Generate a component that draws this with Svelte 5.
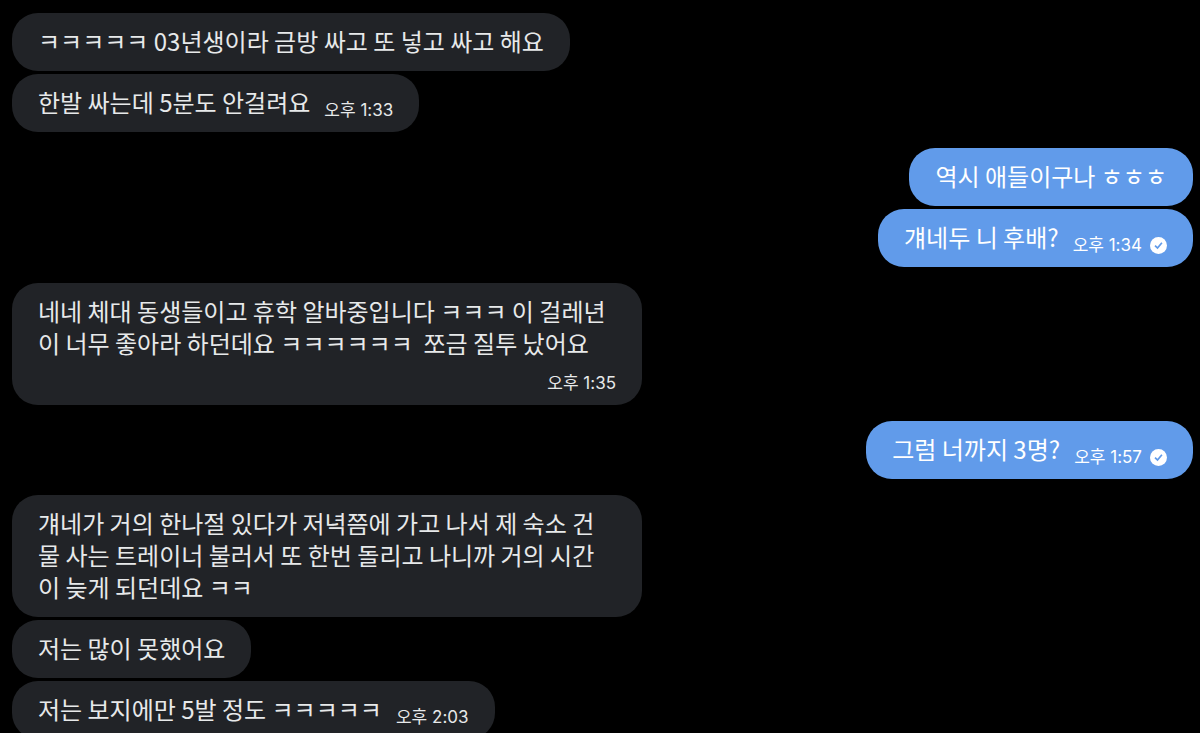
<script>
  const groups = [
    {
      from: "them",
      time: "오후 1:33",
      messages: [
        "ㅋㅋㅋㅋㅋ 03년생이라 금방 싸고 또 넣고 싸고 해요",
        "한발 싸는데 5분도 안걸려요",
      ],
    },
    {
      from: "me",
      time: "오후 1:34",
      messages: ["역시 애들이구나 ㅎㅎㅎ", "걔네두 니 후배?"],
    },
    {
      from: "them",
      time: "오후 1:35",
      messages: [
        "네네 체대 동생들이고 휴학 알바중입니다 ㅋㅋㅋ 이 걸레년이 너무 좋아라 하던데요 ㅋㅋㅋㅋㅋㅋ  쪼금 질투 났어요",
      ],
    },
    {
      from: "me",
      time: "오후 1:57",
      messages: ["그럼 너까지 3명?"],
    },
    {
      from: "them",
      time: "오후 2:03",
      messages: [
        "걔네가 거의 한나절 있다가 저녁쯤에 가고 나서 제 숙소 건물 사는 트레이너 불러서 또 한번 돌리고 나니까 거의 시간이 늦게 되던데요 ㅋㅋ",
        "저는 많이 못했어요",
        "저는 보지에만 5발 정도 ㅋㅋㅋㅋㅋ",
      ],
    },
  ];
</script>

<style>
  :global(body) {
    margin: 0;
    background: #000;
  }

  .chat {
    display: flex;
    flex-direction: column;
    gap: 16px;
    padding: 13px 7px 13px 12px;
    font-family: "Noto Sans CJK KR", sans-serif;
    font-size: 24px;
    line-height: 32px;
  }

  .group {
    display: flex;
    flex-direction: column;
    align-items: flex-start;
    gap: 3px;
  }

  .group.me {
    align-items: flex-end;
  }

  .bubble {
    display: flex;
    flex-wrap: wrap;
    align-items: flex-end;
    gap: 12px 14px;
    box-sizing: border-box;
    max-width: 630px;
    padding: 12px 26px;
    border-radius: 26px;
    background: #212327;
    color: #e7e9ea;
  }

  .me .bubble {
    background: #619bea;
    color: #fff;
  }

  p {
    margin: 0 0 2px;
    white-space: pre-wrap;
  }

  .meta {
    display: flex;
    align-items: center;
    gap: 8px;
    margin-left: auto;
    font-family: Inter, "Noto Sans CJK KR", sans-serif;
    font-size: 17px;
    line-height: 20px;
  }

  .meta svg {
    width: 17px;
    height: 17px;
  }
</style>

<main class="chat">
  {#each groups as group}
    <section class="group {group.from}">
      {#each group.messages as message, i}
        <div class="bubble">
          <p>{message}</p>
          {#if i === group.messages.length - 1}
            <div class="meta">
              <time>{group.time}</time>
              {#if group.from === "me"}
                <svg viewBox="0 0 17 17" aria-hidden="true">
                  <circle cx="8.5" cy="8.5" r="8.5" fill="#fff" />
                  <path
                    d="M5 8.7l2.5 2.3 4.4-5.3"
                    fill="none"
                    stroke="#619bea"
                    stroke-width="1.7" />
                </svg>
              {/if}
            </div>
          {/if}
        </div>
      {/each}
    </section>
  {/each}
</main>
